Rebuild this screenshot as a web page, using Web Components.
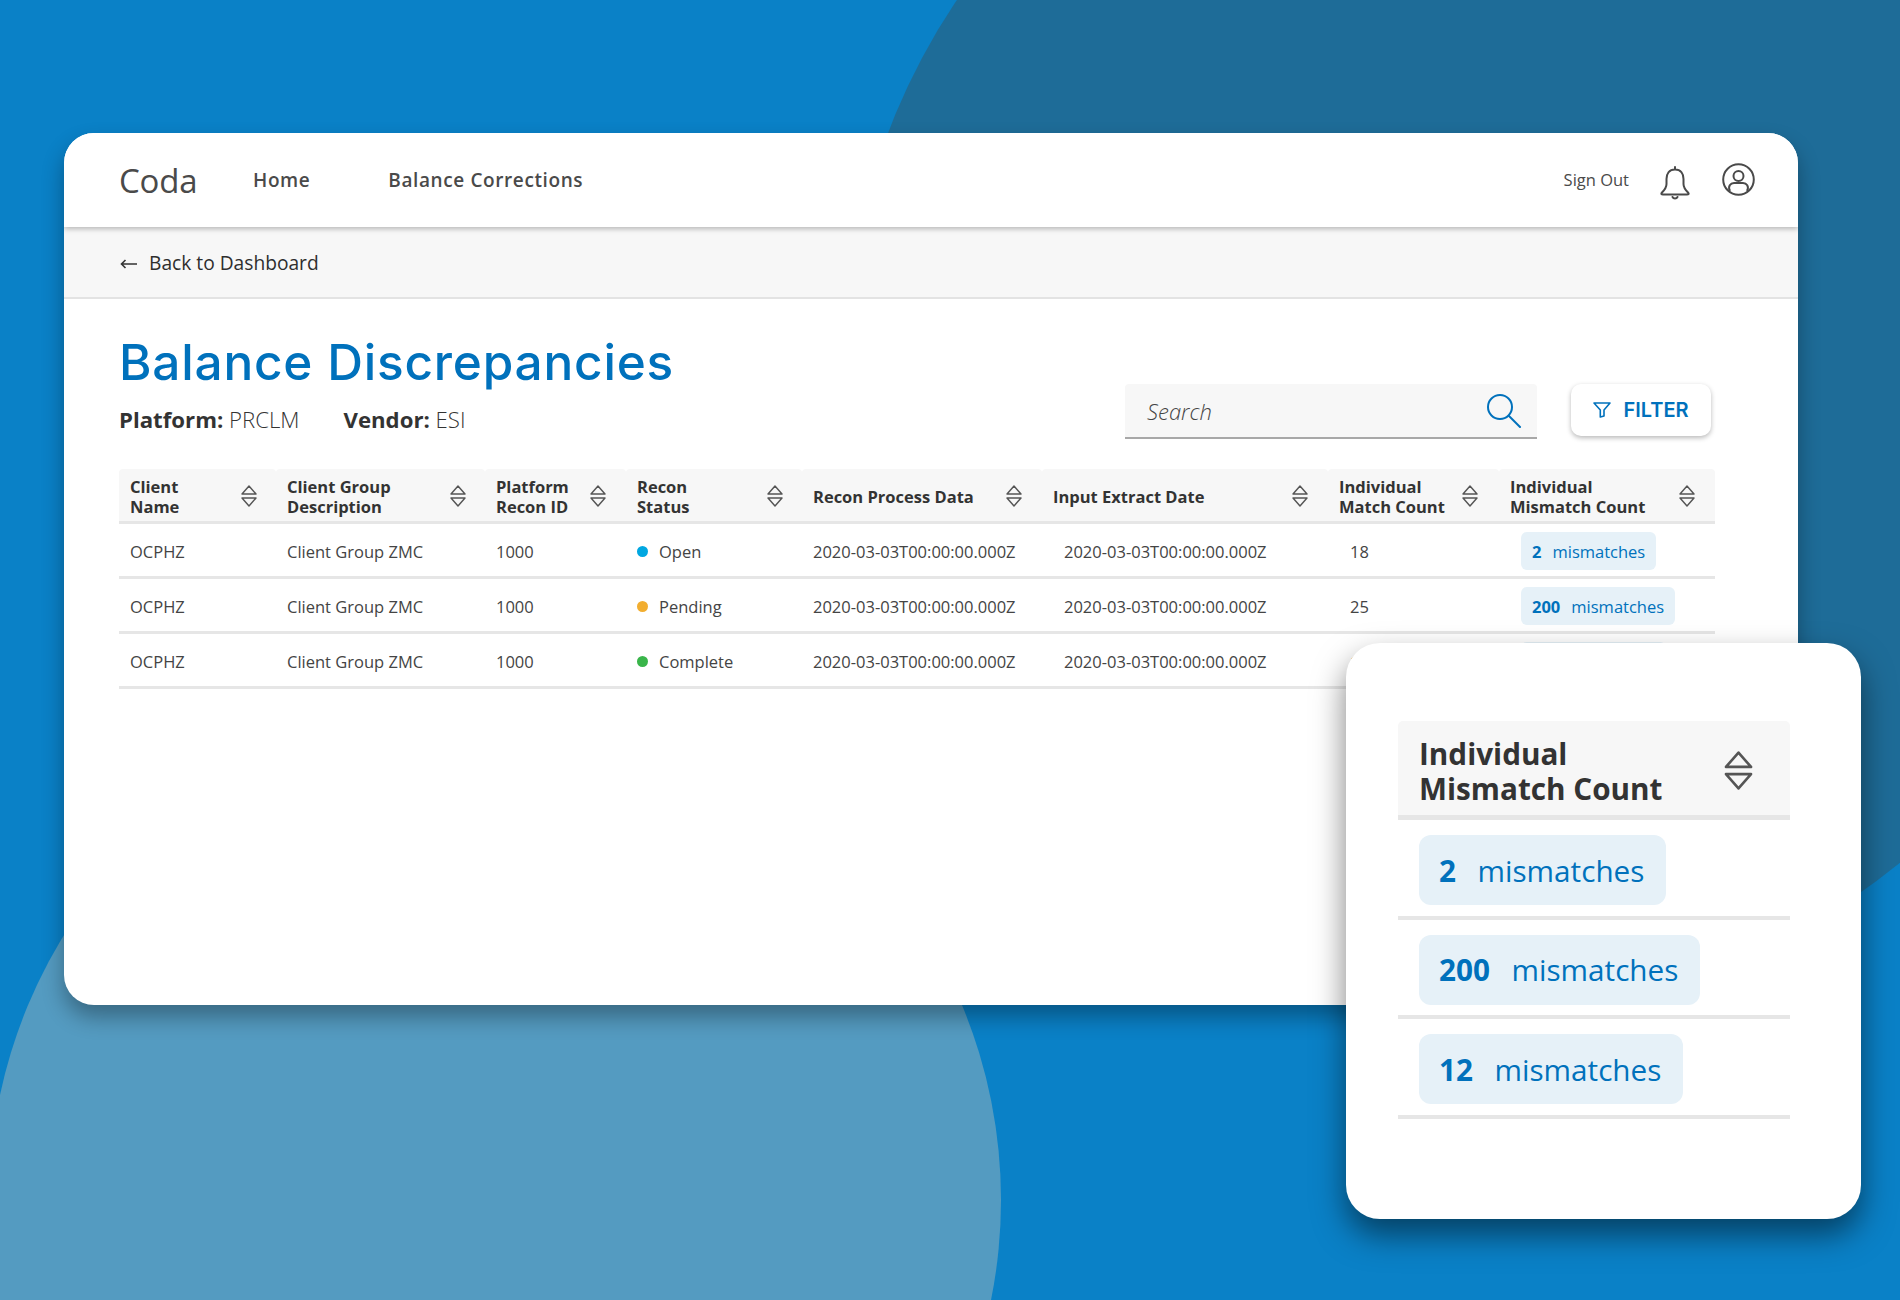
<!DOCTYPE html>
<html>
<head>
<meta charset="utf-8">
<title>Balance Discrepancies</title>
<style>
html, body { margin: 0; padding: 0; }
body { width: 1900px; height: 1300px; overflow: hidden; font-family: "Open Sans", sans-serif; }
</style>
</head>
<body>

<coda-stage>
  <coda-card>
    <coda-header></coda-header>
    <coda-backbar>Back to Dashboard</coda-backbar>
    <coda-toolbar></coda-toolbar>
    <coda-table></coda-table>
  </coda-card>
  <coda-popup></coda-popup>
</coda-stage>

<script>
const SORT_ICON = `<svg viewBox="0 0 16 24" width="16" height="24" fill="none" stroke="#555" stroke-width="1.45" stroke-linejoin="round" stroke-linecap="round">
  <path d="M1 10 L8 2 L15 10 Z"/><path d="M1 14 L8 22 L15 14 Z"/></svg>`;

class CodaStage extends HTMLElement
{
    constructor()
    {
        super();
        this.attachShadow( { mode: 'open' } );
        this.shadowRoot.innerHTML = `
        <style>
        :host {
            display: block;
            position: relative;
            width: 1900px;
            height: 1300px;
            overflow: hidden;
            background: #0a81c7;
        }
        /* background blobs */
        .dark, .light { position: absolute; border-radius: 50%; }
        .dark { left: 846px; top: -284px; width: 1292px; height: 1292px; background: #1e6c98; }
        .light { left: -11px; top: 694px; width: 1012px; height: 1012px; background: #549bc1; }
        .content { position: relative; padding: 133px 102px 0 64px; }
        </style>
        <div class="dark"></div>
        <div class="light"></div>
        <div class="content"><slot></slot></div>
        `;
    }
}
customElements.define( 'coda-stage', CodaStage );

class CodaCard extends HTMLElement
{
    constructor()
    {
        super();
        this.attachShadow( { mode: 'open' } );
        this.shadowRoot.innerHTML = `
        <style>
        :host {
            display: block;
            height: 872px;
            background: #fff;
            border-radius: 30px;
            box-shadow: 0 12px 22px rgba(0,0,0,.33);
        }
        .clip { height: 100%; border-radius: 30px; overflow: hidden; }
        </style>
        <div class="clip"><slot></slot></div>
        `;
    }
}
customElements.define( 'coda-card', CodaCard );

class CodaHeader extends HTMLElement
{
    constructor()
    {
        super();
        this.attachShadow( { mode: 'open' } );
        this.shadowRoot.innerHTML = `
        <style>
        :host {
            display: flex;
            align-items: center;
            position: relative;
            height: 94px;
            padding: 0 43px 0 55px;
            color: #4a4a4a;
            background: #fff;
            box-shadow: 0 2px 5px rgba(0,0,0,.26);
        }
        .logo { font-size: 33px; width: 134px; letter-spacing: -.2px; font-weight: 400; }
        a { font-size: 19px; font-weight: 600; letter-spacing: .6px; margin-right: 78px; margin-top: -1px; }
        .right { margin-left: auto; display: flex; align-items: center; margin-top: -2px; }
        .out { font-size: 16.5px; margin-right: 31px; color: #4a4a4a; }
        svg { display: block; }
        .bell { margin-right: 32px; margin-top: 8px; }
        </style>
        <div class="logo">Coda</div>
        <a>Home</a>
        <a>Balance Corrections</a>
        <div class="right">
            <span class="out">Sign Out</span>
            <svg class="bell" width="30" height="34" viewBox="0 0 30 34" fill="none" stroke="#4a4a4a" stroke-width="2" stroke-linejoin="round" stroke-linecap="round">
                <path d="M15 1 V3.5 C9 3.5 6.5 8 6.5 13 V18 C6.5 22 4 24.5 2 26.5 C0.8 27.8 1.4 28.5 3 28.5 H27 C28.6 28.5 29.2 27.8 28 26.5 C26 24.5 23.5 22 23.5 18 V13 C23.5 8 21 3.5 15 3.5"/>
                <path d="M12.5 31 C13.5 33 16.5 33 17.5 31"/>
            </svg>
            <svg width="33" height="33" viewBox="0 0 33 33" fill="none" stroke="#4a4a4a" stroke-width="2">
                <circle cx="16.5" cy="16.5" r="15.3"/>
                <circle cx="16.5" cy="13" r="5"/>
                <path d="M8 28 C5.5 23.5 8.5 20 12 20 H21 C24.5 20 27.5 23.5 25 28"/>
            </svg>
        </div>
        `;
    }
}
customElements.define( 'coda-header', CodaHeader );

class CodaBackbar extends HTMLElement
{
    constructor()
    {
        super();
        this.attachShadow( { mode: 'open' } );
        this.shadowRoot.innerHTML = `
        <style>
        :host {
            display: flex;
            align-items: center;
            gap: 12px;
            box-sizing: border-box;
            height: 72px;
            padding: 0 0 0 56px;
            background: #f7f7f7;
            border-bottom: 2px solid #e3e3e3;
            font-size: 19.2px;
            color: #2e2e2e;
        }
        svg { display: block; margin-top: 4px; }
        </style>
        <svg width="17" height="10" viewBox="0 0 17 10" fill="none" stroke="#333" stroke-width="1.6">
            <path d="M17 5 H1.5 M5.5 1 L1.5 5 L5.5 9"/>
        </svg>
        <slot></slot>
        `;
    }
}
customElements.define( 'coda-backbar', CodaBackbar );

class CodaToolbar extends HTMLElement
{
    constructor()
    {
        super();
        this.attachShadow( { mode: 'open' } );
        this.shadowRoot.innerHTML = `
        <style>
        :host {
            display: flex;
            box-sizing: border-box;
            height: 170px;
            padding: 0 87px 0 55px;
            position: relative;
            color: #333;
        }
        .info { flex: 1; }
        h1 {
            margin: 33px 0 0;
            font-family: Inter, sans-serif;
            font-size: 49.5px;
            letter-spacing: .8px;
            line-height: 60px;
            font-weight: 500;
            color: #0071bc;
        }
        .meta { margin-top: 13px; font-size: 22.2px; line-height: 30px; display: flex; gap: 44px; font-weight: 300; }
        b { font-weight: 700; }
        .search {
            box-sizing: border-box;
            width: 412px;
            height: 55px;
            margin-top: 85px;
            padding: 0 15px 0 22px;
            display: flex;
            align-items: center;
            justify-content: space-between;
            background: #f7f7f7;
            border-bottom: 2px solid #a8a8a8;
            border-radius: 4px 4px 0 0;
            font-size: 22px;
            font-style: italic;
            font-weight: 300;
            color: #444;
        }
        .search svg { margin-top: 1px; }
        .filter {
            box-sizing: border-box;
            width: 140px;
            height: 52px;
            margin: 85px 0 0 34px;
            display: flex;
            align-items: center;
            justify-content: center;
            gap: 12px;
            background: #fff;
            border-radius: 10px;
            box-shadow: 0 2px 5px rgba(0,0,0,.28);
            font-family: Inter, sans-serif;
            font-size: 20px;
            font-weight: 600;
            color: #0071bc;
        }
        svg { display: block; }
        </style>
        <div class="info">
            <h1>Balance Discrepancies</h1>
            <div class="meta"><span><b>Platform:</b> PRCLM</span><span><b>Vendor:</b> ESI</span></div>
        </div>
        <div class="search">
            <span>Search</span>
            <svg width="35" height="34" viewBox="0 0 35 34" fill="none" stroke="#0071bc" stroke-width="2" stroke-linecap="round">
                <circle cx="13" cy="13" r="12"/>
                <path d="M22 22 L33 33"/>
            </svg>
        </div>
        <div class="filter">
            <svg width="18" height="16" viewBox="0 0 18 16" fill="none" stroke="#0071bc" stroke-width="1.6" stroke-linejoin="round">
                <path d="M1 1 H17 L11 8 V14 L7.3 15 V8 Z"/>
            </svg>
            FILTER
        </div>
        `;
    }
}
customElements.define( 'coda-toolbar', CodaToolbar );

class CodaBadge extends HTMLElement
{
    constructor()
    {
        super();
        this.attachShadow( { mode: 'open' } );
        this.shadowRoot.innerHTML = `
        <style>
        :host {
            display: inline-flex;
            align-items: center;
            box-sizing: border-box;
            height: var(--badge-h, 38px);
            padding: 0 var(--badge-pad-r, 11px) 0 var(--badge-pad, 11px);
            gap: var(--badge-gap, 11px);
            background: #e6f1f8;
            border-radius: var(--badge-r, 6px);
            color: #0071bc;
            font-size: var(--badge-font, 16.5px);
        }
        b { font-weight: 700; }
        </style>
        <b></b><span>mismatches</span>
        `;
    }
    connectedCallback()
    {
        this.shadowRoot.querySelector( 'b' ).textContent = this.getAttribute( 'count' );
    }
}
customElements.define( 'coda-badge', CodaBadge );

class CodaTable extends HTMLElement
{
    constructor()
    {
        super();
        this.attachShadow( { mode: 'open' } );
        const heads = [
            [ 'Client<br>Name', 249 - 119 ],
            [ 'Client Group<br>Description', 458 - 276 ],
            [ 'Platform<br>Recon ID', 598 - 485 ],
            [ 'Recon<br>Status', 775 - 626 ],
            [ 'Recon Process Data', 1014 - 802 ],
            [ 'Input Extract Date', 1300 - 1042 ],
            [ 'Individual<br>Match Count', 1470 - 1328 ],
            [ 'Individual<br>Mismatch Count', 1687 - 1499 ],
        ];
        const rows = [
            [ 'Open', '#00a7e1', '18', '2' ],
            [ 'Pending', '#f2ae30', '25', '200' ],
            [ 'Complete', '#39b54a', '12', '12' ],
        ];
        let html = heads.map( h => `<div class="th" style="--ic:${ h[ 1 ] - 8 }px"><span>${ h[ 0 ] }</span><i>${ SORT_ICON }</i></div>` ).join( '' );
        for ( const r of rows )
        {
            html += `
            <div class="td">OCPHZ</div>
            <div class="td">Client Group ZMC</div>
            <div class="td">1000</div>
            <div class="td"><span class="dot" style="background:${ r[ 1 ] }"></span>${ r[ 0 ] }</div>
            <div class="td">2020-03-03T00:00:00.000Z</div>
            <div class="td far">2020-03-03T00:00:00.000Z</div>
            <div class="td far">${ r[ 2 ] }</div>
            <div class="td far"><coda-badge count="${ r[ 3 ] }"></coda-badge></div>`;
        }
        this.shadowRoot.innerHTML = `
        <style>
        :host {
            display: grid;
            grid-template-columns: 157px 209px 141px 176px 240px 286px 171px 216px;
            grid-template-rows: 55px 55px 55px 55px;
            margin: 0 83px 0 55px;
            color: #444;
        }
        .th {
            position: relative;
            display: flex;
            align-items: center;
            box-sizing: border-box;
            padding: 3px 0 0 11px;
            background: #f7f7f7;
            border-bottom: 3px solid #e6e6e6;
            border-radius: 4px 4px 0 0;
            font-size: 16.5px;
            line-height: 20px;
            font-weight: 700;
            color: #333;
        }
        .th i { position: absolute; left: var(--ic); top: 15px; }
        .th svg { display: block; }
        .td {
            display: flex;
            align-items: center;
            box-sizing: border-box;
            padding: 2px 0 0 11px;
            border-bottom: 3px solid #e6e6e6;
            font-size: 16.5px;
        }
        .far { padding-left: 22px; }
        .dot { width: 11px; height: 11px; border-radius: 50%; margin-right: 11px; }
        </style>
        ${ html }
        `;
    }
}
customElements.define( 'coda-table', CodaTable );

class CodaPopup extends HTMLElement
{
    constructor()
    {
        super();
        this.attachShadow( { mode: 'open' } );
        this.shadowRoot.innerHTML = `
        <style>
        :host {
            display: block;
            position: absolute;
            left: 1346px;
            top: 643px;
            box-sizing: border-box;
            width: 515px;
            height: 576px;
            padding: 78px 71px 0 52px;
            background: #fff;
            border-radius: 34px;
            box-shadow: 0 16px 32px rgba(0,0,0,.5);
            color: #333;
            --badge-h: 70px;
            --badge-pad: 20px;
            --badge-pad-r: 22px;
            --badge-gap: 21.5px;
            --badge-r: 12px;
            --badge-font: 29.7px;
        }
        .head {
            position: relative;
            box-sizing: border-box;
            height: 99px;
            padding: 15px 0 0 21px;
            background: #f7f7f7;
            border-bottom: 5px solid #e6e6e6;
            border-radius: 5px 5px 0 0;
            font-size: 29.7px;
            line-height: 35px;
            font-weight: 700;
        }
        .head svg { position: absolute; left: 325px; top: 28px; width: 31px; height: 43px; }
        .row {
            box-sizing: border-box;
            height: 99.5px;
            padding: 15px 0 0 21px;
            border-bottom: 4px solid #e6e6e6;
        }
        </style>
        <div class="head">Individual<br>Mismatch Count${ SORT_ICON }</div>
        <div class="row"><coda-badge count="2"></coda-badge></div>
        <div class="row"><coda-badge count="200"></coda-badge></div>
        <div class="row"><coda-badge count="12"></coda-badge></div>
        `;
    }
}
customElements.define( 'coda-popup', CodaPopup );
</script>
</body>
</html>
